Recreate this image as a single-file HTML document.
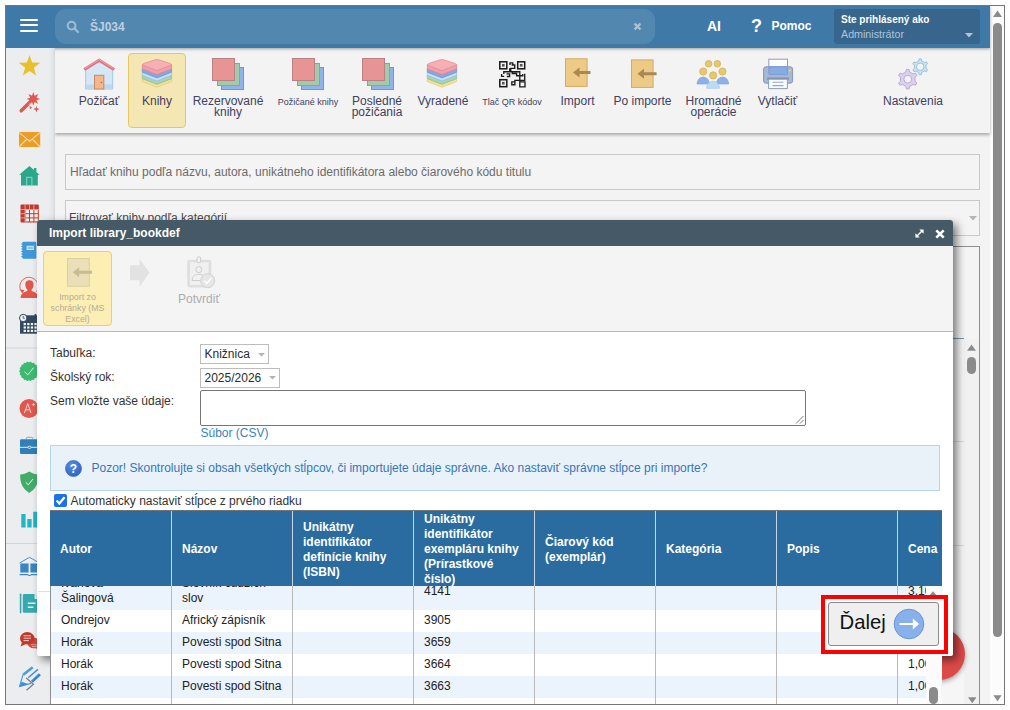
<!DOCTYPE html>
<html>
<head>
<meta charset="utf-8">
<style>
*{box-sizing:border-box;margin:0;padding:0}
html,body{width:1010px;height:710px;overflow:hidden;background:#fff;font-family:"Liberation Sans",sans-serif;}
.abs{position:absolute}
#frame{position:absolute;left:5px;top:5px;width:1000px;height:700px;border:1px solid #767676;background:#f3f3f3;overflow:hidden}
/* coordinates inside #wrap are page coordinates */
#wrap{position:absolute;left:-6px;top:-6px;width:1010px;height:710px}
#hdr{left:6px;top:6px;width:984px;height:42px;background:#3e79a7;box-shadow:0 1px 3px rgba(0,0,0,.35)}
#srch{left:55px;top:9px;width:600px;height:35px;border-radius:11px;background:#5287b0}
#side{left:6px;top:48px;width:49px;height:657px;background:linear-gradient(to right,#ecedef 0,#ecedef 42px,#e4e5e7 47px,#d2d3d5 49px)}
.tb{left:55px;top:47px;width:935px;height:86px;background:#f3f3f3;box-shadow:0 2px 3px rgba(0,0,0,.3)}
.tl{position:absolute;font-size:12px;line-height:11px;color:#41415f;text-align:center;width:100px;top:96px}
.tl.s{font-size:9px;top:97px}
.inp{position:absolute;background:#f4f4f4;border:1px solid #c8c8c8;color:#6b6b6b;font-size:12px}
#dlg{left:37px;top:220px;width:916px;height:436px;background:#fff;border-radius:3px 3px 2px 2px;box-shadow:4px 4px 8px rgba(0,0,0,.5)}
#dtitle{left:0;top:0;width:916px;height:26px;background:#455a66;border-radius:3px 3px 0 0;color:#fff;font-weight:bold;font-size:12px;line-height:26px;padding-left:12px}
#dtb{left:0;top:26px;width:916px;height:86px;background:#f4f4f4;border-bottom:1px solid #b9b9b9}
.lbl{position:absolute;font-size:12px;color:#333;left:13px}
.sel{position:absolute;border:1px solid #bdbdbd;background:#fff;font-size:12px;color:#2b2b2b;height:19px;line-height:19.5px;padding-left:3.5px}
table{border-collapse:collapse}

.hl{position:absolute;left:19.5px;width:18px;height:2.1px;background:#fff;border-radius:1px}
.ht{position:absolute;color:#fff;font-weight:bold;white-space:nowrap}

#tbl{position:absolute;left:13px;top:290px;width:891.5px;height:200px;overflow:hidden;background:#fff}
#thead{position:absolute;left:0;top:0;width:892px;height:76px;background:#2a6ca0;border-top:1px solid #6e7478}
.th{position:absolute;top:0;height:75px;width:121px;border-left:1px solid #c7d5e2;color:#fff;font-weight:bold;font-size:12px;line-height:15px;padding-left:10px;display:flex;align-items:center}
.th.f{border-left:none}
.row{position:absolute;left:0;width:892px;height:22px}
.row.a{background:#ebf3fd}
.row.w{background:#fff}
.td{position:absolute;top:0;height:100%;width:121px;border-left:1px solid #b9b9b9;font-size:12px;line-height:15px;color:#222;padding-left:10px;display:flex;align-items:center;white-space:nowrap}
.td.f{border-left:1px solid #8f8f8f}
.td span{display:block;position:relative;top:-0.5px}
.th span{display:block;position:relative;top:1px}
</style>
</head>
<body>
<div id="frame"><div id="wrap">


<!-- page content behind the dialog -->
<div class="inp" style="left:65px;top:154px;width:915px;height:36px;line-height:34px;padding-left:4px;white-space:nowrap">Hľadať knihu podľa názvu, autora, unikátneho identifikátora alebo čiarového kódu titulu</div>
<div class="inp" style="left:65px;top:200px;width:915px;height:36px;line-height:34px;padding-left:3px;white-space:nowrap;color:#4a4a4a">Filtrovať knihy podľa kategórií</div>
<svg class="abs" style="left:968.5px;top:216px" width="8" height="5" viewBox="0 0 8 5"><path d="M0 0 H8 L4 4.5 Z" fill="#b5b5b5"/></svg>
<div class="abs" style="left:65px;top:246px;width:915px;height:470px;border:1px solid #8f8f8f;border-left-color:#c8c8c8;background:#f4f4f4"></div>
<div class="abs" style="left:66px;top:338px;width:898px;height:1px;background:#7f95ad"></div>
<div class="abs" style="left:66px;top:339px;width:898px;height:370px;background:#f6f6f6"></div>
<div class="abs" style="left:66px;top:441px;width:898px;height:1px;background:#dcdcdc"></div>
<div class="abs" style="left:66px;top:545px;width:898px;height:1px;background:#dcdcdc"></div>
<!-- inner scrollbar -->
<div class="abs" style="left:964px;top:339px;width:15px;height:366px;background:#f1f1f1"></div>
<svg class="abs" style="left:967px;top:343.5px" width="9" height="7" viewBox="0 0 9 7"><path d="M0 6.8 L4.5 0.6 L9 6.8 Z" fill="#8b8b8b"/></svg>
<div class="abs" style="left:967px;top:356.5px;width:9px;height:17.5px;border-radius:4.5px;background:#8b8b8b"></div>
<svg class="abs" style="left:967.5px;top:697px" width="8.5" height="6.5" viewBox="0 0 9 7"><path d="M0 0.3 L4.5 6.6 L9 0.3 Z" fill="#8b8b8b"/></svg>
<!-- FAB -->
<div class="abs" style="left:912.5px;top:627.5px;width:52px;height:52px;border-radius:26px;background:#dc4a48;box-shadow:0 2px 5px rgba(0,0,0,.35)"></div>
<!-- outer scrollbar -->
<div class="abs" style="left:990px;top:6px;width:14px;height:699px;background:#fcfcfc"></div>
<svg class="abs" style="left:993px;top:10px" width="9" height="7" viewBox="0 0 9 7"><path d="M0 6.9 L4.5 0.5 L9 6.9 Z" fill="#8b8b8b"/></svg>
<div class="abs" style="left:993.3px;top:22.5px;width:8.4px;height:614px;border-radius:4.2px;background:#8b8b8b"></div>
<svg class="abs" style="left:993px;top:695px" width="9" height="6.5" viewBox="0 0 9 7"><path d="M0 0.3 L4.5 6.7 L9 0.3 Z" fill="#8b8b8b"/></svg>

<!-- page background panels -->
<div class="abs tb"></div>
<div class="abs" id="hdr"></div>
<div class="abs" id="srch"></div>
<div class="abs" id="side"></div>



<!-- toolbar -->
<div class="abs" style="left:128px;top:53px;width:58px;height:75px;background:#f5e7b4;border:1px solid #e9c65d;border-radius:4px"></div>
<svg class="abs" style="left:83px;top:57px" width="32" height="33" viewBox="0 0 32 33"><path d="M2.7 13 L16.2 4.6 L29.7 13 V32 H2.7 Z" fill="#d5e7f5" stroke="#a8c6e6"/><rect x="3.2" y="27.5" width="26" height="4" fill="#bcd8ee"/><rect x="11.5" y="18.3" width="9.3" height="13.7" fill="#f3b78d" stroke="#c98865"/><circle cx="18.3" cy="25.5" r="0.8" fill="#a86a48"/><path d="M1.2 12.5 L16.2 3.2 L31.2 12.5" fill="none" stroke="#e56f78" stroke-width="3"/><path d="M1.8 11.6 L16.2 2.7 L30.6 11.6" fill="none" stroke="#f2a3a6" stroke-width="1"/></svg>
<svg class="abs" style="left:141px;top:59px" width="32" height="30" viewBox="0 0 32 30"><path d="M1.3 19.60 L15.95 25.30 L30.6 19.60 L30.6 22.50 L15.95 28.20 L1.3 22.50 Z" fill="#f4e19d" stroke="#e6cb74" stroke-width="0.8" stroke-linejoin="round"/><path d="M1.3 16.30 L15.95 22.00 L30.6 16.30 L30.6 19.60 L15.95 25.30 L1.3 19.60 Z" fill="#a7d5b1" stroke="#8cc297" stroke-width="0.8" stroke-linejoin="round"/><path d="M1.3 13.10 L15.95 18.80 L30.6 13.10 L30.6 16.30 L15.95 22.00 L1.3 16.30 Z" fill="#c2e0f7" stroke="#9cc2ea" stroke-width="0.8" stroke-linejoin="round"/><path d="M1.3 9.90 L15.95 15.60 L30.6 9.90 L30.6 13.10 L15.95 18.80 L1.3 13.10 Z" fill="#82a9e6" stroke="#6c92d6" stroke-width="0.8" stroke-linejoin="round"/><path d="M1.3 5.90 L15.95 11.60 L30.6 5.90 L30.6 9.90 L15.95 15.60 L1.3 9.90 Z" fill="#f0a0a6" stroke="#e8838d" stroke-width="0.8" stroke-linejoin="round"/><path d="M1.3 5.9 Q1.3 5.1000000000000005 3.3 4.300000000000001 L14.45 0.7 Q15.95 0.3 17.45 0.7 L28.6 4.300000000000001 Q30.6 5.1000000000000005 30.6 5.9 L15.95 11.6 Z" fill="#f4b0b4" stroke="#ea8d96" stroke-width="0.8" stroke-linejoin="round"/></svg><svg class="abs" style="left:210.5px;top:57px" width="34" height="34" viewBox="0 0 34 34"><rect x="10.5" y="10.5" width="22" height="22" fill="#8fb4ec" stroke="#7195cf"/><rect x="6.5" y="6.5" width="22" height="22" fill="#a3cba6" stroke="#7fae86"/><rect x="1.5" y="1.5" width="22" height="22" fill="#e89494" stroke="#b88088"/></svg><svg class="abs" style="left:290.5px;top:57px" width="34" height="34" viewBox="0 0 34 34"><rect x="10.5" y="10.5" width="22" height="22" fill="#8fb4ec" stroke="#7195cf"/><rect x="6.5" y="6.5" width="22" height="22" fill="#a3cba6" stroke="#7fae86"/><rect x="1.5" y="1.5" width="22" height="22" fill="#e89494" stroke="#b88088"/></svg><svg class="abs" style="left:360.5px;top:57px" width="34" height="34" viewBox="0 0 34 34"><rect x="10.5" y="10.5" width="22" height="22" fill="#8fb4ec" stroke="#7195cf"/><rect x="6.5" y="6.5" width="22" height="22" fill="#a3cba6" stroke="#7fae86"/><rect x="1.5" y="1.5" width="22" height="22" fill="#e89494" stroke="#b88088"/></svg><svg class="abs" style="left:426px;top:59px" width="32" height="30" viewBox="0 0 32 30"><path d="M1.3 19.60 L15.95 25.30 L30.6 19.60 L30.6 22.50 L15.95 28.20 L1.3 22.50 Z" fill="#f4e19d" stroke="#e6cb74" stroke-width="0.8" stroke-linejoin="round"/><path d="M1.3 16.30 L15.95 22.00 L30.6 16.30 L30.6 19.60 L15.95 25.30 L1.3 19.60 Z" fill="#a7d5b1" stroke="#8cc297" stroke-width="0.8" stroke-linejoin="round"/><path d="M1.3 13.10 L15.95 18.80 L30.6 13.10 L30.6 16.30 L15.95 22.00 L1.3 16.30 Z" fill="#c2e0f7" stroke="#9cc2ea" stroke-width="0.8" stroke-linejoin="round"/><path d="M1.3 9.90 L15.95 15.60 L30.6 9.90 L30.6 13.10 L15.95 18.80 L1.3 13.10 Z" fill="#82a9e6" stroke="#6c92d6" stroke-width="0.8" stroke-linejoin="round"/><path d="M1.3 5.90 L15.95 11.60 L30.6 5.90 L30.6 9.90 L15.95 15.60 L1.3 9.90 Z" fill="#f0a0a6" stroke="#e8838d" stroke-width="0.8" stroke-linejoin="round"/><path d="M1.3 5.9 Q1.3 5.1000000000000005 3.3 4.300000000000001 L14.45 0.7 Q15.95 0.3 17.45 0.7 L28.6 4.300000000000001 Q30.6 5.1000000000000005 30.6 5.9 L15.95 11.6 Z" fill="#f4b0b4" stroke="#ea8d96" stroke-width="0.8" stroke-linejoin="round"/></svg>
<svg class="abs" style="left:498.7px;top:60.8px" width="27" height="27" viewBox="0 0 27 27" fill="none" stroke="#1c1c1c" stroke-width="1.35"><g stroke-width="1.55"><rect x="0.8" y="0.8" width="7" height="7"/><rect x="18.7" y="0.8" width="7" height="7"/><rect x="0.8" y="18.7" width="7" height="7"/></g><g fill="#555" stroke="none"><rect x="3" y="3" width="2.6" height="2.6"/><rect x="20.9" y="3" width="2.6" height="2.6"/><rect x="3" y="20.9" width="2.6" height="2.6"/></g><path d="M11 4 V1.9 H13.8 V4.2 M12.6 4 H15.7 V7.3 H11.8 V10.7 M4.8 13 V10.7 H20.8 V25.8 H26 V20.9 H20.8 M2.6 12.9 V15.4 H5.2 M7.5 12.8 H10.6 V15.5 H7.8 M10.7 10.7 V7.3 M13.3 10.7 V12.5 H17.6 V14.7 H23.8 V13 M25.7 12.8 V19.4 H15.9 V23.7 H12.8 V20.9 H15.9"/></svg>
<svg class="abs" style="left:564.5px;top:58px" width="28" height="31" viewBox="0 0 28 31"><rect x="0.5" y="0.8" width="21.6" height="27.6" fill="#edca86" stroke="#d3ab62"/><path d="M8 14.5 L14.5 9.5 L14.5 13 L25.5 13 L25.5 16 L14.5 16 L14.5 19.5 Z" fill="#a98851"/></svg><svg class="abs" style="left:630.5px;top:59px" width="28" height="31" viewBox="0 0 28 31"><rect x="0.5" y="0.9" width="21.6" height="27.5" fill="#edca86" stroke="#d3ab62"/><path d="M6.5 14.8 L13.0 9.8 L13.0 13.3 L25.6 13.3 L25.6 16.3 L13.0 16.3 L13.0 19.8 Z" fill="#a98851"/></svg>
<svg class="abs" style="left:696px;top:59px" width="34" height="30" viewBox="0 0 34 30"><g fill="#e5c96f" stroke="#d4b24f" stroke-width="0.8"><circle cx="12.6" cy="4.8" r="3.3"/><circle cx="21.3" cy="4.8" r="3.3"/><circle cx="7.2" cy="12.5" r="3.6"/><circle cx="26.5" cy="12.5" r="3.6"/><circle cx="17.1" cy="16.4" r="3.6"/></g><path d="M1 25 A6.2 7 0 0 1 13.4 25 Z" fill="#8cb1e8" stroke="#7da0d8" stroke-width="0.6"/><path d="M20.3 25 A6.2 7 0 0 1 32.7 25 Z" fill="#8cb1e8" stroke="#7da0d8" stroke-width="0.6"/><path d="M10.6 29.3 A6.4 7 0 0 1 23.4 29.3 Z" fill="#bddcf4" stroke="#9cc3e6" stroke-width="0.6"/></svg>
<svg class="abs" style="left:762px;top:58px" width="32" height="32" viewBox="0 0 32 32"><rect x="6.8" y="1.2" width="18.7" height="9" fill="#fdfdfd" stroke="#8c9ebb"/><rect x="1.6" y="8.8" width="29" height="16.4" rx="2.3" fill="#a9b8d2" stroke="#8497b7"/><rect x="6.8" y="8.8" width="18.7" height="7.8" rx="1" fill="#86abe5" stroke="#6f92cf" stroke-width="0.7"/><rect x="5" y="19.6" width="22" height="2.4" rx="1.2" fill="#7f90ae"/><path d="M6.6 21.2 H25.4 V30.6 H6.6 Z" fill="#f9fafc" stroke="#8c9ebb"/><path d="M10.5 24.3 H21.5 M10.5 27.6 H21.5" stroke="#9aa9c2" stroke-width="1.1"/><circle cx="27.9" cy="12.6" r="1" fill="#ecd36f"/></svg>
<svg class="abs" style="left:898px;top:58px" width="32" height="33" viewBox="0 0 32 33"><path fill-rule="evenodd" d="M20.71 2.99 L21.13 0.97 L23.27 0.97 L23.69 2.99 L26.49 4.60 L28.44 3.96 L29.51 5.82 L27.98 7.19 L27.98 10.41 L29.51 11.78 L28.44 13.64 L26.49 13.00 L23.69 14.61 L23.27 16.63 L21.13 16.63 L20.71 14.61 L17.91 13.00 L15.96 13.64 L14.89 11.78 L16.42 10.41 L16.42 7.19 L14.89 5.82 L15.96 3.96 L17.91 4.60 Z M26.00 8.80 A3.80 3.80 0 1 0 18.40 8.80 A3.80 3.80 0 1 0 26.00 8.80 Z" fill="#c9e4f5" stroke="#93bcd9" stroke-width="0.9" stroke-linejoin="round"/><path fill-rule="evenodd" d="M7.88 13.94 L8.41 11.39 L11.09 11.39 L11.62 13.94 L15.11 15.95 L17.57 15.13 L18.92 17.46 L16.97 19.18 L16.97 23.22 L18.92 24.94 L17.57 27.27 L15.11 26.45 L11.62 28.46 L11.09 31.01 L8.41 31.01 L7.88 28.46 L4.39 26.45 L1.93 27.27 L0.58 24.94 L2.53 23.22 L2.53 19.18 L0.58 17.46 L1.93 15.13 L4.39 15.95 Z M13.65 21.20 A3.90 3.90 0 1 0 5.85 21.20 A3.90 3.90 0 1 0 13.65 21.20 Z" fill="#dad1eb" stroke="#b5a4d3" stroke-width="0.9" stroke-linejoin="round"/></svg>
<div class="tl" style="left:49px">Požičať</div>
<div class="tl" style="left:107px">Knihy</div>
<div class="tl" style="left:178px">Rezervované<br>knihy</div>
<div class="tl s" style="left:258px">Požičané knihy</div>
<div class="tl" style="left:327px">Posledné<br>požičania</div>
<div class="tl" style="left:393px">Vyradené</div>
<div class="tl s" style="left:462px">Tlač QR kódov</div>
<div class="tl" style="left:527.5px">Import</div>
<div class="tl" style="left:592.5px">Po importe</div>
<div class="tl" style="left:663.5px">Hromadné<br>operácie</div>
<div class="tl" style="left:727.5px">Vytlačiť</div>
<div class="tl" style="left:863px">Nastavenia</div>


<!-- sidebar icons -->
<svg class="abs" style="left:6px;top:47px" width="48" height="658" viewBox="6 47 48 658">
<path d="M29.50 55.00 L32.20 62.58 L40.25 62.81 L33.87 67.72 L36.14 75.44 L29.50 70.90 L22.86 75.44 L25.13 67.72 L18.75 62.81 L26.80 62.58 Z" fill="#e9c02b"/>
<!-- wand -->
<path d="M21.2 110.8 L31.8 100.3" stroke="#e0574f" stroke-width="3.5" stroke-linecap="round"/><path d="M28.8 104.8 L32.5 101.1" stroke="#f6d5d2" stroke-width="0.9"/>
<path d="M33.30 92.00 L34.56 95.85 L38.18 94.02 L36.35 97.64 L40.20 98.90 L36.35 100.16 L38.18 103.78 L34.56 101.95 L33.30 105.80 L32.04 101.95 L28.42 103.78 L30.25 100.16 L26.40 98.90 L30.25 97.64 L28.42 94.02 L32.04 95.85 Z" fill="#e0574f"/>
<path d="M36.40 105.80 L37.18 108.32 L39.70 109.10 L37.18 109.88 L36.40 112.40 L35.62 109.88 L33.10 109.10 L35.62 108.32 Z" fill="#e0574f"/><path d="M29.6 106 L32.2 107.6 L29.9 109.2 Z" fill="#e0574f"/>
<!-- envelope -->
<rect x="19" y="132" width="21.2" height="15" fill="#eb9d25"/>
<path d="M19.3 132.6 L29.6 141.2 L39.9 132.6 M19.3 146.6 L26.5 139.5 M39.9 146.6 L32.7 139.5" fill="none" stroke="#f9dcae" stroke-width="1.1"/>
<!-- home -->
<path d="M29.4 166 L39.6 174.8 L37.8 174.8 L37.8 185.6 L21 185.6 L21 174.8 L19.2 174.8 Z M34 168 H36.4 V172 L34 170 Z" fill="#2ba78b"/>
<rect x="26.7" y="177.3" width="5.2" height="8.3" fill="none" stroke="#8fd6c3" stroke-width="1"/>
<!-- grid -->
<rect x="20.5" y="204.6" width="18.3" height="17.8" rx="1" fill="#c0392b"/>
<g fill="#fbeeee"><rect x="25.6" y="210" width="3.4" height="3.2"/><rect x="30" y="210" width="3.4" height="3.2"/><rect x="34.4" y="210" width="3.4" height="3.2"/><rect x="25.6" y="214.2" width="3.4" height="3.2"/><rect x="30" y="214.2" width="3.4" height="3.2"/><rect x="34.4" y="214.2" width="3.4" height="3.2"/><rect x="25.6" y="218.4" width="3.4" height="3"/><rect x="30" y="218.4" width="3.4" height="3"/><rect x="34.4" y="218.4" width="3.4" height="3"/></g>
<g stroke="#ecd0cc" stroke-width="0.7"><path d="M20.5 209.5 H38.8 M20.5 213.7 H25 M20.5 217.9 H25 M25.1 204.6 V222.4 M29.5 204.6 V209.5 M33.9 204.6 V209.5"/></g>
<!-- notebook -->
<rect x="22.3" y="241.8" width="14" height="17" rx="1.3" fill="#3f98d8"/>
<path d="M21.3 244 h2 M21.3 246.5 h2 M21.3 249 h2 M21.3 251.5 h2 M21.3 254 h2 M21.3 256.5 h2" stroke="#3f98d8" stroke-width="1.1"/>
<rect x="26.6" y="245.8" width="7.2" height="4.2" fill="#cfe6f7"/><rect x="27.6" y="246.8" width="5.2" height="2.2" fill="#8fc3ea"/>
<!-- user -->
<path d="M29.4 280.2 C32.2 280.2 33.7 282 33.6 284.6 C33.5 287 32.8 288.6 31.6 289.6 L31.6 291 C34 292 38 292.6 38.3 297.9 L20.6 297.9 C20.9 292.6 24.9 292 27.3 291 L27.3 289.6 C26.1 288.6 25.4 287 25.3 284.6 C25.2 282 26.6 280.2 29.4 280.2 Z" fill="#e2574c"/>
<path d="M21.8 292.2 A9.2 9.2 0 1 1 36.6 291.6" fill="none" stroke="#e2574c" stroke-width="0.9"/>
<path d="M20 289.2 L22.4 293.6 L24.4 290.2 Z" fill="#e2574c"/>
<!-- calendar -->
<rect x="20" y="318.5" width="19.5" height="15.2" fill="#34495e"/>
<rect x="24" y="315.3" width="15.5" height="4" fill="#34495e"/>
<rect x="34.6" y="314" width="1.7" height="3.6" fill="#34495e"/>
<g fill="#f2f4f6"><rect x="23.6" y="323" width="2.3" height="2.2"/><rect x="27.2" y="323" width="2.3" height="2.2"/><rect x="30.8" y="323" width="2.3" height="2.2"/><rect x="34.4" y="323" width="2.3" height="2.2"/><rect x="23.6" y="326.4" width="2.3" height="2.2"/><rect x="27.2" y="326.4" width="2.3" height="2.2"/><rect x="30.8" y="326.4" width="2.3" height="2.2"/><rect x="34.4" y="326.4" width="2.3" height="2.2"/><rect x="23.6" y="329.8" width="2.3" height="2.2"/><rect x="27.2" y="329.8" width="2.3" height="2.2"/><rect x="30.8" y="329.8" width="2.3" height="2.2"/><rect x="34.4" y="329.8" width="2.3" height="2.2"/></g>
<circle cx="23.2" cy="318" r="3.7" fill="#eef0f3" stroke="#34495e" stroke-width="1"/><path d="M23.2 315.8 V318.2 H24.8" fill="none" stroke="#34495e" stroke-width="0.8"/>
<path d="M6 348 H54" stroke="#d3d4d6" stroke-width="1"/>
<!-- green badge -->
<path d="M38.85 371.30 L38.71 371.72 L38.36 372.12 L38.00 372.49 L37.81 372.85 L37.87 373.27 L38.08 373.73 L38.27 374.22 L38.26 374.67 L37.98 375.02 L37.52 375.27 L37.06 375.49 L36.75 375.78 L36.66 376.18 L36.70 376.69 L36.71 377.22 L36.55 377.63 L36.17 377.87 L35.65 377.95 L35.14 378.00 L34.75 378.16 L34.53 378.51 L34.39 379.00 L34.22 379.50 L33.92 379.83 L33.49 379.92 L32.97 379.82 L32.48 379.69 L32.06 379.71 L31.73 379.96 L31.43 380.38 L31.10 380.79 L30.71 381.00 L30.27 380.94 L29.82 380.66 L29.40 380.37 L29.00 380.25 L28.60 380.37 L28.18 380.66 L27.73 380.94 L27.29 381.00 L26.90 380.79 L26.57 380.38 L26.27 379.96 L25.94 379.71 L25.52 379.69 L25.03 379.82 L24.51 379.92 L24.08 379.83 L23.78 379.50 L23.61 379.00 L23.47 378.51 L23.25 378.16 L22.86 378.00 L22.35 377.95 L21.83 377.87 L21.45 377.63 L21.29 377.22 L21.30 376.69 L21.34 376.18 L21.25 375.78 L20.94 375.49 L20.48 375.27 L20.02 375.02 L19.74 374.67 L19.73 374.22 L19.92 373.73 L20.13 373.27 L20.19 372.85 L20.00 372.49 L19.64 372.12 L19.29 371.72 L19.15 371.30 L19.29 370.88 L19.64 370.48 L20.00 370.11 L20.19 369.75 L20.13 369.33 L19.92 368.87 L19.73 368.38 L19.74 367.93 L20.02 367.58 L20.48 367.33 L20.94 367.11 L21.25 366.82 L21.34 366.42 L21.30 365.91 L21.29 365.38 L21.45 364.97 L21.83 364.73 L22.35 364.65 L22.86 364.60 L23.25 364.44 L23.47 364.09 L23.61 363.60 L23.78 363.10 L24.07 362.77 L24.51 362.68 L25.03 362.78 L25.52 362.91 L25.94 362.89 L26.27 362.64 L26.57 362.22 L26.90 361.81 L27.29 361.60 L27.73 361.66 L28.18 361.94 L28.60 362.23 L29.00 362.35 L29.40 362.23 L29.82 361.94 L30.27 361.66 L30.71 361.60 L31.10 361.81 L31.43 362.22 L31.73 362.64 L32.06 362.89 L32.48 362.91 L32.97 362.78 L33.49 362.68 L33.92 362.77 L34.22 363.10 L34.39 363.60 L34.53 364.09 L34.75 364.44 L35.14 364.60 L35.65 364.65 L36.17 364.73 L36.55 364.97 L36.71 365.38 L36.70 365.91 L36.66 366.42 L36.75 366.82 L37.06 367.11 L37.52 367.33 L37.98 367.58 L38.26 367.93 L38.27 368.38 L38.08 368.87 L37.87 369.33 L37.81 369.75 L38.00 370.11 L38.36 370.48 L38.71 370.88 Z" fill="#3cba70"/>
<path d="M24.6 371.8 L27.8 374.8 L33.6 367.6" fill="none" stroke="#e9f7ee" stroke-width="1"/>
<!-- A+ -->
<circle cx="29" cy="408.5" r="9.5" fill="#e2574c"/>
<path d="M24.3 413 L27.8 403.6 L31 413 M25.6 409.8 H30" fill="none" stroke="#f7d8d4" stroke-width="1"/>
<path d="M31.8 404.6 H35 M33.4 403 V406.2" stroke="#f7d8d4" stroke-width="0.8"/>
<!-- briefcase -->
<rect x="20" y="439.3" width="19.4" height="14.7" rx="1.2" fill="#2f7fb9"/>
<path d="M26.3 439.3 V438.4 Q26.3 437.3 27.4 437.3 H31.6 Q32.7 437.3 32.7 438.4 V439.3" fill="none" stroke="#5d9bc9" stroke-width="0.8"/>
<path d="M20 447.3 H27.8 M31.2 447.3 H39.4" stroke="#e8f1f8" stroke-width="1"/><ellipse cx="29.5" cy="447.3" rx="1.7" ry="1.1" fill="none" stroke="#e8f1f8" stroke-width="0.9"/>
<!-- shield -->
<path d="M29.3 471.6 C32.5 473.8 35.5 474.4 38.5 474.6 C38.7 483.5 35.5 489.3 29.3 492.9 C23.1 489.3 19.9 483.5 20.1 474.6 C23.1 474.4 26.1 473.8 29.3 471.6 Z" fill="#41ad69"/>
<path d="M25.8 482.4 L28.3 484.8 L33 479" fill="none" stroke="#eef8f1" stroke-width="1"/>
<!-- bars -->
<rect x="21.3" y="514" width="4.3" height="13.5" fill="#1fb6c6"/><rect x="27.3" y="519" width="4.3" height="8.5" fill="#1fb6c6"/><rect x="33.2" y="511.7" width="4.3" height="15.8" fill="#1fb6c6"/>
<path d="M6 543.5 H54" stroke="#d3d4d6" stroke-width="1"/>
<!-- book -->
<path d="M19.6 563 L29.5 557.3 L39.4 563" fill="none" stroke="#3a86c1" stroke-width="0.9"/>
<path d="M20.3 563.5 H28.6 V572.6 H20.3 Z M30.4 563.5 H38.7 V572.6 H30.4 Z" fill="#3a86c1"/>
<path d="M19.6 574.6 H27.5 Q29.5 576.3 31.5 574.6 H39.4" fill="none" stroke="#3a86c1" stroke-width="1.1"/>
<!-- doc -->
<path d="M20.6 594.2 V612.6" stroke="#36aab0" stroke-width="1.6" stroke-linecap="round"/>
<path d="M24.3 594 H34.5 L39.5 599 V611.4 Q39.5 612.8 38 612.8 H24.3 Q22.8 612.8 22.8 611.4 V595.4 Q22.8 594 24.3 594 Z" fill="#36aab0"/>
<path d="M34.5 594 V599 H39.5 Z" fill="#d9f0f1"/>
<path d="M27.8 603.2 H35.5 M27.8 607.2 H33.5" stroke="#eaf7f7" stroke-width="1.6"/>
<!-- chat -->
<ellipse cx="34" cy="643" rx="6.6" ry="5.2" fill="#d4493c"/><path d="M38 646.5 L40.5 650.3 L35 648 Z" fill="#d4493c"/>
<ellipse cx="27.3" cy="638.3" rx="7.3" ry="6.2" fill="#c0392b"/><path d="M22 642 L20.6 646.6 L26 644 Z" fill="#c0392b"/>
<path d="M23.5 635.8 H31 M23.5 638.2 H31 M23.5 640.6 H29" stroke="#f4d9d5" stroke-width="0.9"/>
<path d="M31 644.8 H37.5 M32 646.6 H37.5" stroke="#f4d9d5" stroke-width="0.6"/>
<!-- pencil -->
<path d="M23.2 674.8 L32.7 667.2" stroke="#4a9ddd" stroke-width="2.6"/>
<path d="M28.2 677.8 L37.9 669.4" stroke="#3d90d8" stroke-width="1.4"/>
<path d="M31.9 681.8 L39.9 674.2" stroke="#3a84d2" stroke-width="2.8"/>
<path d="M23 674.6 L19.6 686.3 L31 683.4" fill="none" stroke="#4a9ddd" stroke-width="1.2"/>
<path d="M19.2 686.9 L21.8 681.8 L28.6 684.2 Z" fill="#3d90d8"/>
<path d="M26.2 678.1 L33.4 684.2 L26.5 690.2" fill="none" stroke="#7a7f86" stroke-width="1.3"/>
</svg>

<!-- header contents -->
<div class="hl" style="top:18.8px"></div><div class="hl" style="top:24.3px"></div><div class="hl" style="top:29.8px"></div>
<svg class="abs" style="left:66px;top:20px" width="14" height="14" viewBox="0 0 14 14"><circle cx="5.6" cy="5.6" r="3.9" fill="none" stroke="#9fbdd4" stroke-width="2"/><path d="M8.4 8.4 L12 12" stroke="#9fbdd4" stroke-width="2.2" stroke-linecap="round"/></svg>
<div class="ht" style="left:90px;top:20px;font-size:12px;line-height:14px;color:#bdd0e1">ŠJ034</div>
<svg class="abs" style="left:633px;top:22px" width="9" height="9" viewBox="0 0 9 9"><path d="M1.5 1.5 L7.5 7.5 M7.5 1.5 L1.5 7.5" stroke="#a9c3d8" stroke-width="2.3"/></svg>
<div class="ht" style="left:707px;top:18px;font-size:14px;line-height:16px">AI</div>
<div class="ht" style="left:751px;top:16px;font-size:18px;line-height:20px">?</div>
<div class="ht" style="left:771.5px;top:19px;font-size:12px;line-height:14px">Pomoc</div>
<div class="abs" style="left:834px;top:9px;width:146px;height:35px;background:#38658b;border-radius:3px"></div>
<div class="ht" style="left:841px;top:14px;font-size:10px;line-height:12px">Ste prihlásený ako</div>
<div class="ht" style="left:841px;top:28px;font-size:10.7px;line-height:13px;font-weight:normal;color:#a9c5dd">Administrátor</div>
<svg class="abs" style="left:965px;top:33px" width="8" height="5" viewBox="0 0 8 5"><path d="M0 0 L8 0 L4 4.5 Z" fill="#b9c3cc"/></svg>

<!-- MODAL -->
<div class="abs" id="dlg">
  <div class="abs" id="dtitle">Import library_bookdef</div>

  <div class="abs" id="dtb"></div>
  <!-- dialog toolbar -->
  <svg class="abs" style="left:877.5px;top:8.5px" width="9" height="9" viewBox="0 0 9 9"><path d="M1.5 7.5 L7.5 1.5" stroke="#fff" stroke-width="1.5"/><path d="M4.3 0.4 H8.6 V4.7 Z M0.4 4.3 V8.6 H4.7 Z" fill="#fff"/></svg>
  <svg class="abs" style="left:897.5px;top:8.8px" width="10" height="10" viewBox="0 0 10 10"><path d="M1.3 1.3 L8.7 8.7 M8.7 1.3 L1.3 8.7" stroke="#fff" stroke-width="2.6"/></svg>
  <div class="abs" style="left:6px;top:31px;width:69px;height:75px;background:#fdeeb3;border:1px solid #f3cd68;border-radius:4px"></div>
  <svg class="abs" style="left:29.5px;top:37.5px" width="27" height="30" viewBox="0 0 27 30"><rect x="0.5" y="0.5" width="21.8" height="27.7" fill="#eadfb6" stroke="#dccf9f"/><path d="M5.7 14.2 L12.2 9.2 L12.2 12.7 L25 12.7 L25 15.7 L12.2 15.7 L12.2 19.2 Z" fill="#c8bc94"/></svg>
  <div class="abs" style="left:6px;top:71.5px;width:69px;text-align:center;font-size:8.8px;line-height:11px;color:#b5ad93">Import zo<br>schránky (MS<br>Excel)</div>
  <svg class="abs" style="left:93px;top:38.5px" width="20" height="28" viewBox="0 0 20 28"><path d="M0 6.3 H9.6 V0 L19.4 13.8 L9.6 27.7 V21.2 H0 Z" fill="#e2e2e2"/></svg>
  <svg class="abs" style="left:149px;top:36px" width="30" height="33" viewBox="0 0 30 33"><rect x="2.6" y="5" width="21.4" height="25.2" rx="1.2" fill="#f0f0f0" stroke="#dedede" stroke-width="2.6"/><rect x="11" y="0.8" width="3.6" height="6" rx="1.8" fill="#f4f4f4" stroke="#cfcfcf" stroke-width="1.1"/><circle cx="12.8" cy="13.6" r="3" fill="#f1f1f1" stroke="#cdcdcd" stroke-width="1"/><path d="M6.2 24.5 C6.2 19.5 9.5 18.3 12.8 18.3 C16 18.3 19.3 19.5 19.3 24.5 Z" fill="#f1f1f1" stroke="#cdcdcd" stroke-width="1"/><circle cx="21.7" cy="24.7" r="7" fill="#e6e6e6" stroke="#d2d2d2" stroke-width="1"/><path d="M18.3 24.8 L20.8 27.4 L25.3 22" fill="none" stroke="#fff" stroke-width="1.5"/></svg>
  <div class="abs" style="left:132px;top:72px;width:60px;text-align:center;font-size:12px;line-height:14px;color:#adadad">Potvrdiť</div>
  <!-- form -->
  <div class="lbl" style="top:126px;line-height:14px">Tabuľka:</div>
  <div class="lbl" style="top:150px;line-height:14px">Školský rok:</div>
  <div class="lbl" style="top:174px;line-height:14px">Sem vložte vaše údaje:</div>
  <div class="sel" style="left:163px;top:124px;width:69px;height:19.5px">Knižnica</div>
  <svg class="abs" style="left:221px;top:132.5px" width="7" height="4" viewBox="0 0 7 4"><path d="M0 0 H7 L3.5 3.6 Z" fill="#b3b3b3"/></svg>
  <div class="sel" style="left:163px;top:148px;width:80px;height:19.5px">2025/2026</div>
  <svg class="abs" style="left:232px;top:156.3px" width="7" height="4" viewBox="0 0 7 4"><path d="M0 0 H7 L3.5 3.6 Z" fill="#b3b3b3"/></svg>
  <div class="abs" style="left:163px;top:170px;width:606px;height:36px;border:1px solid #767676;border-radius:2px;background:#fff"></div>
  <svg class="abs" style="left:758px;top:195px" width="9" height="9" viewBox="0 0 9 9"><path d="M1 8.5 L8.5 1 M5 8.5 L8.5 5" stroke="#707070" stroke-width="0.9"/></svg>
  <div class="abs" style="left:163.5px;top:206px;font-size:12px;line-height:14px;color:#3a7fc1;white-space:nowrap">Súbor (CSV)</div>
  <!-- info -->
  <div class="abs" style="left:13px;top:225px;width:890px;height:45.5px;background:#eaf2f9;border:1px solid #b7d5e7"></div>
  <svg class="abs" style="left:27.5px;top:239.5px" width="17" height="17" viewBox="0 0 17 17"><defs><radialGradient id="qg" cx="0.4" cy="0.3" r="0.8"><stop offset="0" stop-color="#5a8fe0"/><stop offset="1" stop-color="#2b5fc0"/></radialGradient></defs><circle cx="8.5" cy="8.5" r="8" fill="url(#qg)" stroke="#4a6fc0" stroke-width="0.8"/><text x="8.5" y="12.7" text-anchor="middle" font-family="Liberation Sans, sans-serif" font-weight="bold" font-size="12" fill="#fff">?</text></svg>
  <div class="abs" style="left:54.5px;top:240.5px;font-size:12px;line-height:14px;color:#3676b8;white-space:nowrap">Pozor! Skontrolujte si obsah všetkých stĺpcov, či importujete údaje správne. Ako nastaviť správne stĺpce pri importe?</div>
  <!-- checkbox -->
  <div class="abs" style="left:17px;top:274px;width:13px;height:13px;background:#1a73e8;border-radius:2px"></div>
  <svg class="abs" style="left:17px;top:274px" width="13" height="13" viewBox="0 0 13 13"><path d="M2.6 6.6 L5.3 9.5 L10.6 3.3" fill="none" stroke="#fff" stroke-width="2.2"/></svg>
  <div class="abs" style="left:33.5px;top:273.5px;font-size:12px;line-height:14px;color:#333;white-space:nowrap">Automaticky nastaviť stĺpce z prvého riadku</div>
  <div class="abs" style="left:1px;top:371px;width:12px;height:1px;background:#dedede"></div>
  <!-- table -->
  <div id="tbl"><div class="row a" style="top:63px;height:37px"><div class="td f" style="left:0px"><span>Ivanová<br>Šalingová</span></div><div class="td" style="left:121px"><span>Slovník cudzích<br>slov</span></div><div class="td" style="left:242px"></div><div class="td" style="left:363px"><span>4141</span></div><div class="td" style="left:484px"></div><div class="td" style="left:605px"></div><div class="td" style="left:726px"></div><div class="td" style="left:847px"><span>3,10</span></div></div><div class="row w" style="top:100px;height:22px"><div class="td f" style="left:0px"><span>Ondrejov</span></div><div class="td" style="left:121px"><span>Africký zápisník</span></div><div class="td" style="left:242px"></div><div class="td" style="left:363px"><span>3905</span></div><div class="td" style="left:484px"></div><div class="td" style="left:605px"></div><div class="td" style="left:726px"></div><div class="td" style="left:847px"><span>1,00</span></div></div><div class="row a" style="top:122px;height:22px"><div class="td f" style="left:0px"><span>Horák</span></div><div class="td" style="left:121px"><span>Povesti spod Sitna</span></div><div class="td" style="left:242px"></div><div class="td" style="left:363px"><span>3659</span></div><div class="td" style="left:484px"></div><div class="td" style="left:605px"></div><div class="td" style="left:726px"></div><div class="td" style="left:847px"><span>1,00</span></div></div><div class="row w" style="top:144px;height:22px"><div class="td f" style="left:0px"><span>Horák</span></div><div class="td" style="left:121px"><span>Povesti spod Sitna</span></div><div class="td" style="left:242px"></div><div class="td" style="left:363px"><span>3664</span></div><div class="td" style="left:484px"></div><div class="td" style="left:605px"></div><div class="td" style="left:726px"></div><div class="td" style="left:847px"><span>1,00</span></div></div><div class="row a" style="top:166px;height:22px"><div class="td f" style="left:0px"><span>Horák</span></div><div class="td" style="left:121px"><span>Povesti spod Sitna</span></div><div class="td" style="left:242px"></div><div class="td" style="left:363px"><span>3663</span></div><div class="td" style="left:484px"></div><div class="td" style="left:605px"></div><div class="td" style="left:726px"></div><div class="td" style="left:847px"><span>1,00</span></div></div><div class="row w" style="top:188px;height:22px"><div class="td f" style="left:0px"><span style="top:1.5px">Horák</span></div><div class="td" style="left:121px"><span style="top:1.5px">Povesti spod Sitna</span></div><div class="td" style="left:242px"></div><div class="td" style="left:363px"><span style="top:1.5px">3662</span></div><div class="td" style="left:484px"></div><div class="td" style="left:605px"></div><div class="td" style="left:726px"></div><div class="td" style="left:847px"><span style="top:1.5px">1,00</span></div></div><div id="thead"><div class="th f" style="left:0px"><span>Autor</span></div><div class="th" style="left:121px"><span>Názov</span></div><div class="th" style="left:242px"><span>Unikátny<br>identifikátor<br>definície knihy<br>(ISBN)</span></div><div class="th" style="left:363px"><span>Unikátny<br>identifikátor<br>exempláru knihy<br>(Prírastkové<br>číslo)</span></div><div class="th" style="left:484px"><span>Čiarový kód<br>(exemplár)</span></div><div class="th" style="left:605px"><span>Kategória</span></div><div class="th" style="left:726px"><span>Popis</span></div><div class="th" style="left:847px"><span>Cena</span></div></div>
    <div class="abs" style="left:876px;top:76px;width:15px;height:124px;background:#fbfbfb"></div>
    <svg class="abs" style="left:879px;top:81px" width="8" height="5" viewBox="0 0 8 5"><path d="M0 5 L4 0.3 L8 5 Z" fill="#8b8b8b"/></svg>
    <div class="abs" style="left:878.5px;top:176.5px;width:9px;height:17px;border-radius:4.5px;background:#8b8b8b"></div>
  </div>
  <!-- next button highlight -->
  <div class="abs" style="left:784px;top:375px;width:127px;height:59px;border:4px solid #fe0000;background:#fff"></div>
  <div class="abs" style="left:791px;top:382px;width:111px;height:44px;border:1px solid #8a8a8a;border-radius:3px;background:#efefef"></div>
  <div class="abs" style="left:802.5px;top:388.5px;font-size:20.3px;line-height:26px;color:#111;white-space:nowrap">Ďalej</div>
  <svg class="abs" style="left:856px;top:388px" width="32" height="32" viewBox="0 0 32 32"><circle cx="16" cy="16" r="14.8" fill="#88b1ec" stroke="#6b95d9" stroke-width="1"/><path d="M6.5 16 H21" stroke="#fff" stroke-width="2"/><path d="M19.8 10.6 L26 16 L19.8 21.4 Z" fill="#fff"/></svg>
</div>

</div></div>
</body>
</html>
